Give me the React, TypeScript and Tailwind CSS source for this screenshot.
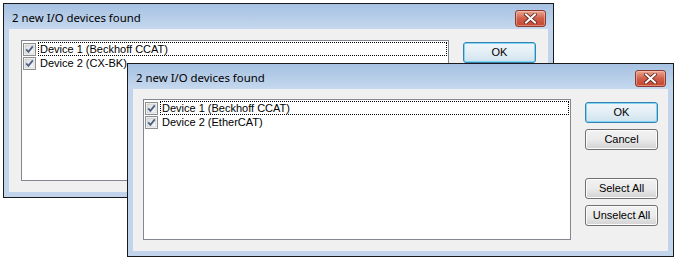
import React from 'react'

type Item = { label: string; focused?: boolean }

const CheckMark = () => (
  <svg width="13" height="13" viewBox="0 0 13 13" className="shrink-0">
    <defs>
      <linearGradient id="cbfill" x1="0" y1="0" x2="1" y2="1">
        <stop offset="0" stopColor="#dcdcdc" />
        <stop offset="1" stopColor="#fbfbfb" />
      </linearGradient>
    </defs>
    <rect x="0.5" y="0.5" width="12" height="12" fill="#ffffff" stroke="#8e8f8f" />
    <rect x="2" y="2" width="9" height="9" fill="url(#cbfill)" stroke="#b9bcc1" strokeWidth="0.6" />
    <path d="M3.2 6.4 L5.4 8.8 L9.8 3.4" fill="none" stroke="#4d6185" strokeWidth="1.8" />
  </svg>
)

const CloseButton = () => (
  <div className="absolute right-[7px] top-[6px] flex h-[17px] w-[31px] items-center justify-center rounded-[3px] border border-[#8a3b2f] bg-gradient-to-b from-[#eba892] via-[#cf5e4a] to-[#c4472f] shadow-[inset_0_0_0_1px_rgba(255,210,200,0.45)]">
    <svg width="13" height="11" viewBox="0 0 13 11">
      <path d="M2 1.5 L11 9.5 M11 1.5 L2 9.5" stroke="#5a2119" strokeWidth="3.6" strokeLinecap="square" />
      <path d="M2 1.5 L11 9.5 M11 1.5 L2 9.5" stroke="#ffffff" strokeWidth="2" strokeLinecap="square" />
    </svg>
  </div>
)

const Button = ({ label, isDefault }: { label: string; isDefault?: boolean }) => (
  <div
    className={
      isDefault
        ? 'flex h-[21px] w-[73px] items-center justify-center rounded-[3px] border border-[#3c7fb1] bg-gradient-to-b from-[#f0f6fa] via-[#e3eef5] to-[#cfe3ee] shadow-[inset_0_0_0_1px_#7ad8f2] text-[11px] text-black'
        : 'flex h-[21px] w-[73px] items-center justify-center rounded-[3px] border border-[#707070] bg-gradient-to-b from-[#f2f2f2] via-[#ebebeb] to-[#d2d2d2] shadow-[inset_0_0_0_1px_#fcfcfc] text-[11px] text-black'
    }
  >
    {label}
  </div>
)

const DeviceList = ({ items }: { items: Item[] }) => (
  <div className="h-[141px] w-[428px] shrink-0 border border-[#828790] bg-white pt-px">
    {items.map((item) => (
      <div key={item.label} className="flex h-[14px] items-center pl-px pr-px">
        <CheckMark />
        <span
          className={
            item.focused
              ? 'ml-[2px] flex h-[14px] flex-1 items-center border border-dotted border-black pl-px leading-none'
              : 'ml-[2px] flex h-[14px] flex-1 items-center border border-transparent pl-px leading-none'
          }
        >
          {item.label}
        </span>
      </div>
    ))}
  </div>
)

type WinProps = {
  className: string
  title: string
  children: React.ReactNode
}

const Dialog = ({ className, title, children }: WinProps) => (
  <div className={`absolute flex flex-col border border-[#1a1a1a] bg-[#c1d4eb] ${className}`}>
    <div className="relative h-[25px] shrink-0 bg-gradient-to-b from-[#a6c1e2] to-[#c5d8ee] pl-[8px] pt-[5px]">
      <span className="font-['Noto_Sans',sans-serif] text-[11.4px] text-black">{title}</span>
      <CloseButton />
    </div>
    <div className="mx-[5px] mb-[5px] flex-1 bg-[#f0f0f0]">{children}</div>
  </div>
)

export default function App() {
  return (
    <div className="relative h-[259px] w-[681px] overflow-hidden bg-white font-['Liberation_Sans',Arial,sans-serif] text-[11px] text-black">
      <Dialog className="left-[3px] top-[3px] h-[195px] w-[551px]" title="2 new I/O devices found">
        <div className="flex pl-[12px] pt-[11px]">
          <DeviceList
            items={[
              { label: 'Device 1 (Beckhoff CCAT)', focused: true },
              { label: 'Device 2 (CX-BK)' },
            ]}
          />
          <div className="ml-[14px] pt-[2px]">
            <Button label="OK" isDefault />
          </div>
        </div>
      </Dialog>

      <Dialog className="left-[127px] top-[63px] h-[194px] w-[547px]" title="2 new I/O devices found">
        <div className="flex pl-[10px] pt-[10px]">
          <DeviceList
            items={[
              { label: 'Device 1 (Beckhoff CCAT)', focused: true },
              { label: 'Device 2 (EtherCAT)' },
            ]}
          />
          <div className="ml-[14px] flex flex-col pt-[3px]">
            <Button label="OK" isDefault />
            <div className="mt-[6px]">
              <Button label="Cancel" />
            </div>
            <div className="mt-[28px]">
              <Button label="Select All" />
            </div>
            <div className="mt-[6px]">
              <Button label="Unselect All" />
            </div>
          </div>
        </div>
      </Dialog>
    </div>
  )
}
